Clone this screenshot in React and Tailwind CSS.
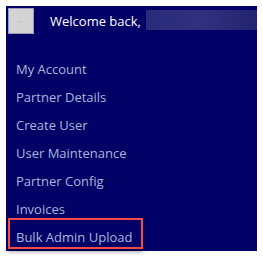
import React from "react";

const items = [
  "My Account",
  "Partner Details",
  "Create User",
  "User Maintenance",
  "Partner Config",
  "Invoices",
];

export default function App() {
  return (
    <div className="w-[263px] h-[258px] bg-white pt-[6px] pl-[6px] font-['Open_Sans',sans-serif]">
      <div className="w-[251px] h-[245px] bg-[#000066] flex flex-col">
        {/* header */}
        <div className="flex items-start h-[50px] pt-[2px] pl-[2px]">
          <button className="w-[26px] h-[26px] bg-[#d3d3d3] border border-[#9a9ab8] flex items-center justify-center text-[5px] text-[#888] leading-none">
            ···
          </button>
          <span className="ml-[16px] mt-[5px] text-[13px] leading-[16px] text-white">
            Welcome back,
          </span>
          <div className="ml-[5px] mt-[2px] flex-1 h-[20px] bg-gradient-to-r from-[#2a2a7a] via-[#30307f] to-[#23236f]" />
        </div>

        {/* menu */}
        <ul className="flex flex-col pl-[10px]">
          {items.map((item) => (
            <li key={item} className="h-[28px] leading-[28px] text-[13px] text-[#a6b8dc]">
              {item}
            </li>
          ))}
          <li className="relative h-[28px] leading-[28px] text-[13px] text-[#a6b8dc]">
            <div className="absolute left-[-8px] top-[-5px] w-[135px] h-[31px] border-[2.5px] border-[#f44a4a] shadow-[0_3px_4px_rgba(0,0,0,0.35)]" />
            Bulk Admin Upload
          </li>
        </ul>
      </div>
    </div>
  );
}
